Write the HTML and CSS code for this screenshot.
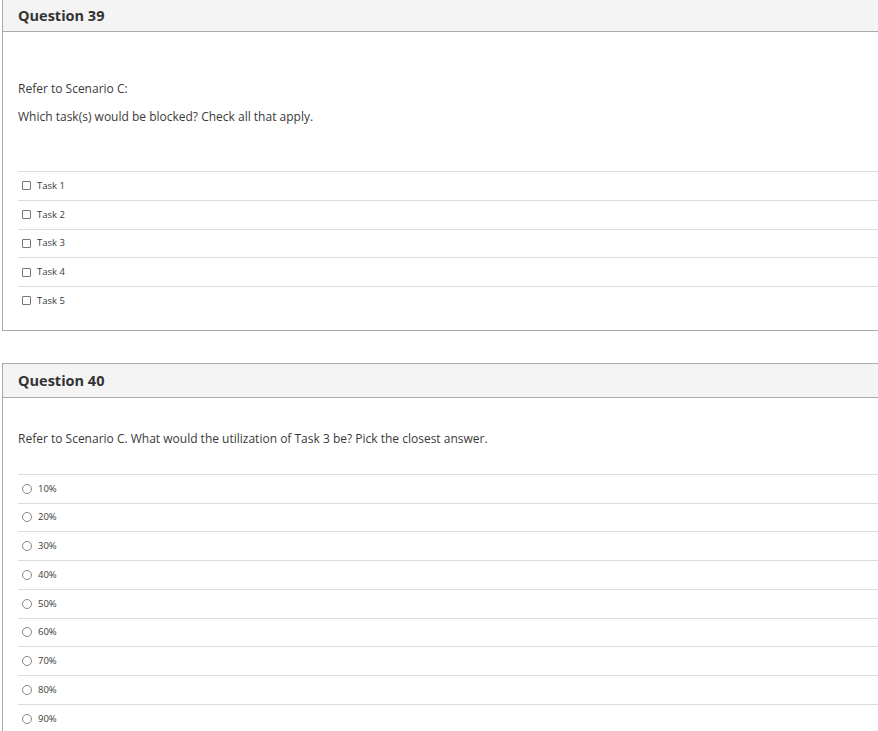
FILE: index.html
```html
<!DOCTYPE html>
<html lang="en">
<head>
<meta charset="utf-8">
<title>Questions</title>
<link rel="stylesheet" href="styles.css">
</head>
<body>
<div class="page">
  <section class="card">
    <header class="card-head"><h3>Question 39</h3></header>
    <div class="card-body">
      <div class="qtext qtext-spaced">
        <p>Refer to Scenario C:</p>
        <p>Which task(s) would be blocked? Check all that apply.</p>
      </div>
      <ul class="options">
        <li class="opt"><span class="check"></span><span class="label">Task 1</span></li>
        <li class="opt"><span class="check"></span><span class="label">Task 2</span></li>
        <li class="opt"><span class="check"></span><span class="label">Task 3</span></li>
        <li class="opt"><span class="check"></span><span class="label">Task 4</span></li>
        <li class="opt"><span class="check"></span><span class="label">Task 5</span></li>
      </ul>
    </div>
  </section>
  <section class="card">
    <header class="card-head"><h3>Question 40</h3></header>
    <div class="card-body">
      <div class="qtext">
        <p>Refer to Scenario C. What would the utilization of Task 3 be? Pick the closest answer.</p>
      </div>
      <ul class="options">
        <li class="opt"><span class="radio"></span><span class="label">10%</span></li>
        <li class="opt"><span class="radio"></span><span class="label">20%</span></li>
        <li class="opt"><span class="radio"></span><span class="label">30%</span></li>
        <li class="opt"><span class="radio"></span><span class="label">40%</span></li>
        <li class="opt"><span class="radio"></span><span class="label">50%</span></li>
        <li class="opt"><span class="radio"></span><span class="label">60%</span></li>
        <li class="opt"><span class="radio"></span><span class="label">70%</span></li>
        <li class="opt"><span class="radio"></span><span class="label">80%</span></li>
        <li class="opt"><span class="radio"></span><span class="label">90%</span></li>
      </ul>
    </div>
  </section>
</div>
</body>
</html>
```
FILE: styles.css
```css
html, body {
  margin: 0;
  padding: 0;
  background: #fff;
  overflow: hidden;
}
body {
  font-family: "Open Sans", "Noto Sans", sans-serif;
  color: #333;
}
.page {
  margin-top: -3px;
  margin-left: 2px;
  margin-right: -20px;
}
.card {
  border: 1px solid #aaa;
  margin-bottom: 32px;
  background: #fff;
}
.card-head {
  background: #f4f4f4;
  border-bottom: 1px solid #aaa;
  height: 33px;
  display: flex;
  align-items: center;
  padding-left: 15px;
}
.card-head h3 {
  margin: 0;
  font-size: 14.5px;
  font-weight: 700;
  color: #333;
  line-height: 17px;
  padding-top: 1px;
}
.card-body {
  padding: 0 0 15px 15px;
}
.qtext {
  padding-top: 32px;
  padding-bottom: 27px;
}
.qtext-spaced {
  padding-top: 48px;
  padding-bottom: 46px;
}
.qtext p {
  margin: 0 0 11px;
  font-size: 12px;
  line-height: 17px;
  color: #3a3a3a;
}
.qtext p:last-child {
  margin-bottom: 0;
}
.options {
  list-style: none;
  margin: 0;
  padding: 0;
}
.opt {
  border-top: 1px solid #ddd;
  height: 27.75px;
  display: flex;
  align-items: center;
  padding-left: 4px;
  gap: 6px;
}
.check {
  width: 7px;
  height: 7px;
  border: 1px solid #777;
  border-radius: 1px;
  flex: none;
}
.radio {
  width: 8px;
  height: 8px;
  border: 1px solid #888;
  border-radius: 50%;
  flex: none;
}
.label {
  font-size: 9.5px;
  line-height: 12px;
  color: #3a3a3a;
}
```
